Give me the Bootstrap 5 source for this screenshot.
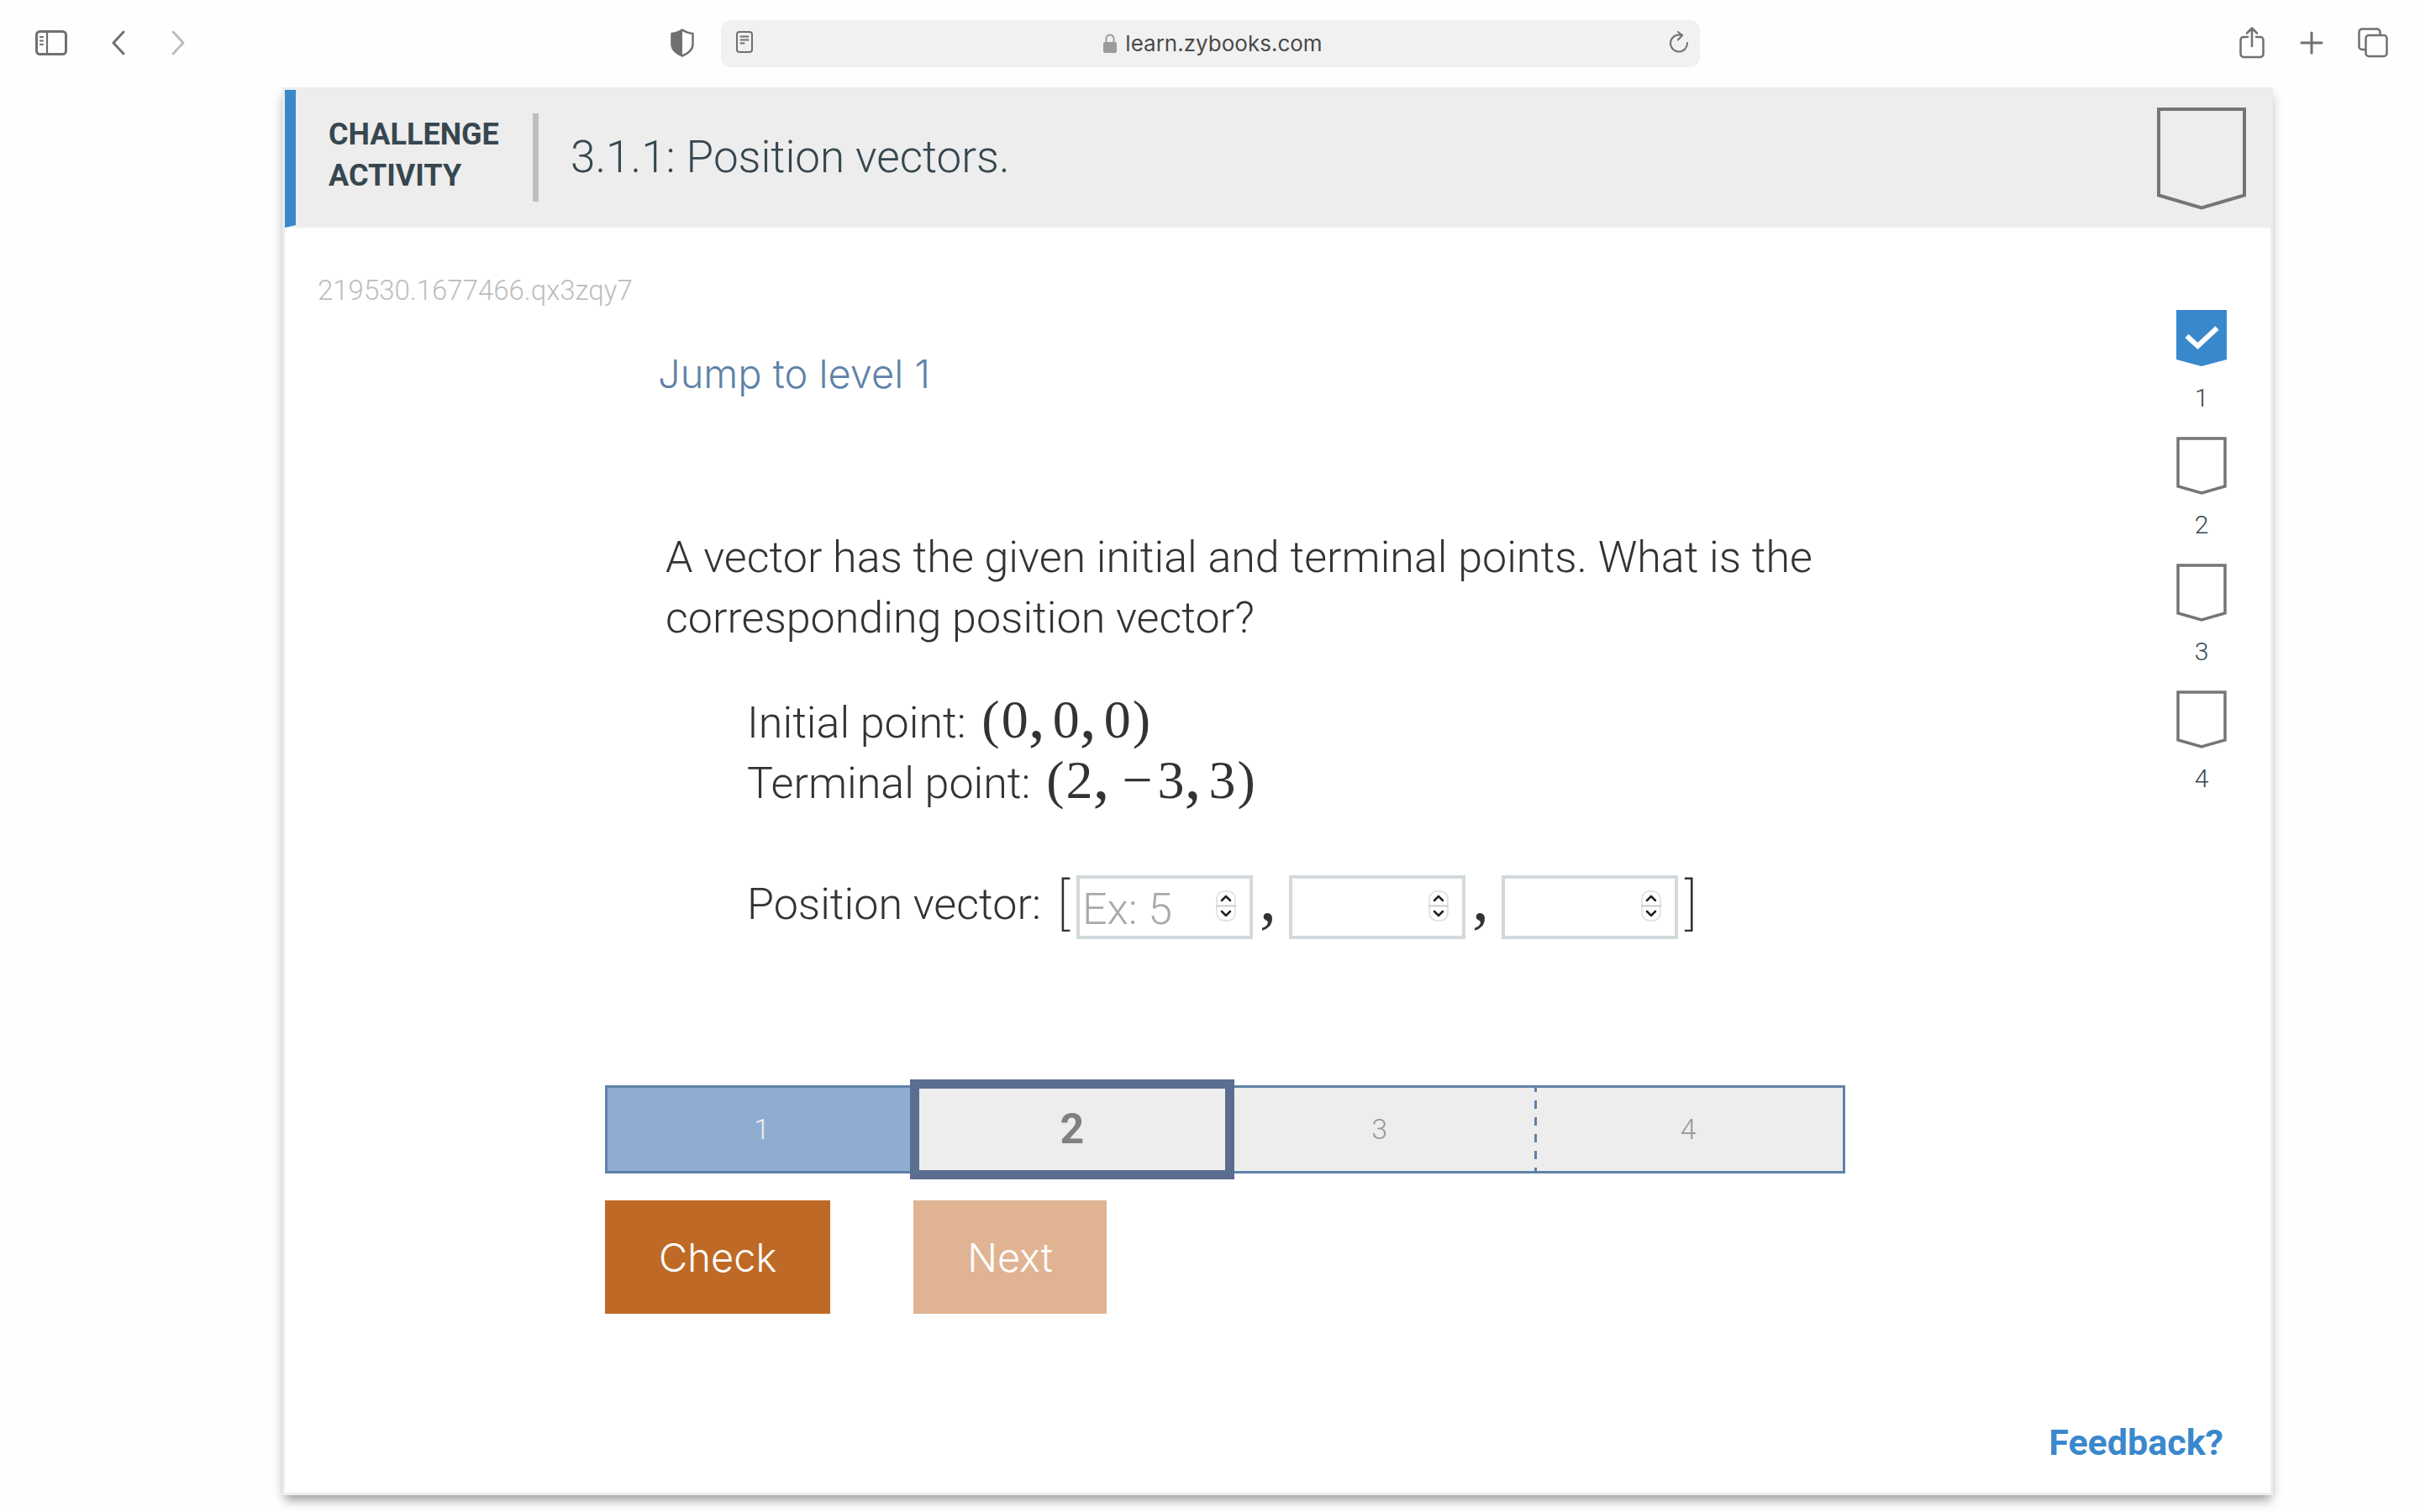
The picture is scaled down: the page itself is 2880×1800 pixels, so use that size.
<!DOCTYPE html>
<html lang="en">
<head>
<meta charset="utf-8">
<meta name="viewport" content="width=device-width, initial-scale=1">
<title>3.1.1: Position vectors</title>
<link href="https://cdn.jsdelivr.net/npm/bootstrap@5.3.0/dist/css/bootstrap.min.css" rel="stylesheet">
<style>
  :root { --ink: #37474f; --blue: #3a88cc; --steel: #5f82a8; --edge: #757575; --pale: #ededed; }
  body { background: #fefefe; font-family: Roboto, "Liberation Sans", sans-serif; font-weight: 300; color: #333; }
  svg { display: block; flex: none; fill: none; stroke: #707070; stroke-width: 3; stroke-linecap: round; stroke-linejoin: round; }
  svg.thin { stroke-width: 2; }
  svg.pennant { stroke: var(--edge); stroke-width: 4; stroke-linejoin: miter; }
  .icon-btn { border: 0; background: none; padding: 0; }

  /* browser toolbar */
  .toolbar { height: 104px; padding: 0 38px; background: #fefefe; position: relative; z-index: 1; }
  .tool-group { flex: 1 1 0; }
  .tool-group.nav-tools { gap: 51px; }
  .tool-group.page-tools { gap: 41px; }
  .address { flex: 0 0 1165px; height: 56px; background: #f1f1f1; border-radius: 12px; padding: 0 12px 0 17px; font: 400 26px/32px Inter, sans-serif; color: #4a4a4a; }

  /* activity card */
  .activity { margin: 0 175px 19px 336px; border: 3px solid var(--pale); background: #fff; box-shadow: 0 9px 12px -3px rgba(0,0,0,.36), 0 0 16px rgba(0,0,0,.06); }
  .activity-head { height: 164px; background: var(--pale); color: var(--ink); border-left: 13px solid var(--blue); border-bottom: 3px solid var(--pale); padding: 0 29px 0 39px; }
  .kind { font-weight: 700; font-size: 36px; line-height: 49px; width: 243px; padding-bottom: 5px; }
  .title { font-weight: 300; font-size: 53px; line-height: 72px; border-left: 7px solid #bdbdbd; padding: 16px 0 17px 38px; }

  .activity-body { padding: 53px 52px 34px 39px; }
  .seed { color: #bdbdbd; font-size: 33px; line-height: 44px; margin-bottom: 47px; }
  .grotesk { font-family: Inter, "Liberation Sans", sans-serif; font-weight: 300; font-size: 47px; line-height: 60px; }
  .jump { display: block; color: var(--steel); text-decoration: none; padding-left: 63px; margin-bottom: 153px; }
  .work { margin-left: 342px; width: 1476px; }
  .prose { font-size: 52px; line-height: 72px; }
  .question { padding-left: 72px; margin-bottom: 53px; }
  .givens { padding-left: 169px; }
  .tex { font-family: "Liberation Serif", serif; font-weight: 400; font-size: 64px; line-height: 64px; padding-left: 4px; }
  .tex .sep { font-size: 80px; line-height: 0; margin-right: 9px; }
  .tex .par { padding: 0 2px; }
  .tex .neg { padding: 0 6px; }

  .answer { margin-top: 72px; margin-bottom: 174px; height: 77px; }
  .bracket { width: 42px; font-weight: 200; font-size: 66px; line-height: 72px; }
  .entry { position: relative; width: 210px; padding-top: 1px; }
  .entry input { width: 100%; height: 76px; border: 4px solid #d2d9dc; border-radius: 0; padding: 4px 4px 0 3px; font: inherit; color: #333; background: #fff; appearance: textfield; }
  .entry input::-webkit-inner-spin-button { appearance: none; }
  .entry input::placeholder { color: #a9a9a9; opacity: 1; }
  .entry svg { position: absolute; right: 20px; top: 19px; }
  .comma { width: 43px; padding-left: 8px; font-family: "Liberation Serif", serif; font-weight: 400; font-size: 80px; line-height: 54px; }

  .steps { height: 105px; border: 3px solid var(--steel); background: var(--pale); color: #999; font-size: 34px; margin-bottom: 32px; }
  .step { flex: 1 1 0; position: relative; }
  .step.done { background: #8fadd1; color: #eee; }
  .step.dashed { background: repeating-linear-gradient(var(--steel) 0 5px, transparent 5px 15px, var(--steel) 15px 20px) left top / 3px 100% no-repeat; }
  .current { position: absolute; inset: -10px -11px -10px -8px; border: 11px solid #5b6e92; background: var(--pale); color: #808080; font-weight: 700; font-size: 50px; z-index: 1; }
  .actions { gap: 99px; margin-bottom: 127px; }
  .act { border: 0; height: 135px; color: #fff; background: #be6a26; padding: 0 64px; }
  .act:disabled { background: #e0b493; color: #fff; }

  .levels { width: 60px; color: var(--ink); font-size: 30px; line-height: 40px; margin-top: 45px; }
  .levels li { height: 151px; text-align: center; }
  .levels svg { margin-bottom: 16px; }
  .feedback { color: var(--blue); font-weight: 700; font-size: 43px; line-height: 52px; text-decoration: none; padding-right: 4px; }
</style>
<script src="https://cdn.jsdelivr.net/npm/bootstrap@5.3.0/dist/js/bootstrap.bundle.min.js"></script>
</head>
<body>
<header class="toolbar d-flex align-items-center">
  <div class="tool-group nav-tools d-flex align-items-center">
    <button class="icon-btn" aria-label="Sidebar"><svg width="42" height="34" viewBox="0 0 42 34"><rect x="5.500" y="2.500" width="35" height="27" rx="4"/><path d="M18 3v26M10 9h3M10 13.500h3M10 18h3" stroke-width="2.200"/></svg></button>
    <button class="icon-btn" aria-label="Back"><svg width="20" height="34" viewBox="0 0 20 34"><path d="M16 3L4 16l12 13"/></svg></button>
    <button class="icon-btn" aria-label="Forward"><svg width="20" height="34" viewBox="0 0 20 34" style="stroke:#bdbdbd"><path d="M4 3l12 13L4 29"/></svg></button>
    <button class="icon-btn ms-auto me-4" aria-label="Privacy report"><svg width="40" height="38" viewBox="0 0 40 38"><path d="M18 2.500C14 5.500 10 6.500 5.500 7v13c0 6 6 11 12.500 13.500C24.500 31 30.500 26 30.500 20V7C26 6.500 22 5.500 18 2.500z" stroke-width="2.500"/><path d="M18 2.500C14 5.500 10 6.500 5.500 7v13c0 6 6 11 12.500 13.500z" fill="#707070" stroke="none"/></svg></button>
  </div>
  <div class="address d-flex align-items-center justify-content-between">
    <svg class="thin" width="22" height="30" viewBox="0 0 22 30"><rect x="2" y="1" width="18" height="24" rx="3"/><path d="M6.500 6.500h9M6.500 10.500h9M6.500 14.500h4"/></svg>
    <span class="d-flex align-items-center gap-2"><svg class="thin" width="24" height="26" viewBox="0 0 24 26" style="stroke:#9b9b9b"><rect x="7" y="12" width="14" height="11" rx="1" fill="#9b9b9b"/><path d="M9.500 11V7a4.500 4.500 0 019 0v4"/></svg>learn.zybooks.com</span>
    <button class="icon-btn" aria-label="Reload"><svg class="thin" width="26" height="30" viewBox="0 0 26 30"><path d="M24 14A10 10 0 1 1 14 4.500h4M13 1l5 4-5 5.500"/></svg></button>
  </div>
  <div class="tool-group page-tools d-flex align-items-center justify-content-end">
    <button class="icon-btn" aria-label="Share"><svg width="32" height="42" viewBox="0 0 32 42"><path d="M11 13H6a3.500 3.500 0 00-3.500 3.500v17A3.500 3.500 0 006 37h20a3.500 3.500 0 003.500-3.500v-17A3.500 3.500 0 0026 13h-5M16 24V3M10 8.500L16 2.500l6 6" stroke-width="2.500"/></svg></button>
    <button class="icon-btn" aria-label="New tab"><svg width="28" height="30" viewBox="0 0 28 30"><path d="M14 2v24M2 14h24"/></svg></button>
    <button class="icon-btn" aria-label="Tabs"><svg width="36" height="38" viewBox="0 0 36 38"><g stroke-width="2.500"><path d="M8 26H5a3.500 3.500 0 01-3.500-3.500V5A3.500 3.500 0 015 1.500h18A3.500 3.500 0 0126.500 5v3"/><rect x="9.500" y="9" width="25" height="25" rx="3.500"/></g></svg></button>
  </div>
</header>

<main class="activity">
  <div class="activity-head d-flex align-items-center">
    <div class="kind">CHALLENGE<br>ACTIVITY</div>
    <h1 class="title m-0">3.1.1: Position vectors.</h1>
    <svg class="pennant ms-auto" width="106" height="124" viewBox="0 0 106 124"><path d="M2 4h102v102.500L53 121.500 2 106.500z"/></svg>
  </div>
  <div class="activity-body">
    <div class="d-flex justify-content-between align-items-start">
      <div>
        <div class="seed">219530.1677466.qx3zqy7</div>
        <div class="work">
          <a class="jump grotesk" href="#">Jump to level 1</a>
          <p class="prose question">A vector has the given initial and terminal points. What is the corresponding position vector?</p>
          <div class="prose givens">
            <div>Initial point: <span class="tex"><span class="par">(</span>0<span class="sep">,</span>0<span class="sep">,</span>0<span class="par">)</span></span></div>
            <div>Terminal point: <span class="tex"><span class="par">(</span>2<span class="sep">,</span><span class="neg">−</span>3<span class="sep">,</span>3<span class="par">)</span></span></div>
            <div class="answer d-flex align-items-start">
              <label for="vx">Position vector:</label>
              <span class="bracket text-end pe-2">[</span>
              <div class="entry"><input id="vx" type="number" placeholder="Ex: 5"><svg width="24" height="37" viewBox="0 0 24 37"><rect x="1" y="1" width="22" height="35" rx="9" fill="#fff" stroke="#ddd" stroke-width="1.500"/><path d="M1 18.500h22" stroke="#ccc" stroke-width="2"/><path d="M7 12l5-5 5 5M7 25l5 5 5-5" stroke="#222" stroke-width="2.500"/></svg></div>
              <span class="comma">,</span>
              <div class="entry"><input aria-label="y component" type="number"><svg width="24" height="37" viewBox="0 0 24 37"><rect x="1" y="1" width="22" height="35" rx="9" fill="#fff" stroke="#ddd" stroke-width="1.500"/><path d="M1 18.500h22" stroke="#ccc" stroke-width="2"/><path d="M7 12l5-5 5 5M7 25l5 5 5-5" stroke="#222" stroke-width="2.500"/></svg></div>
              <span class="comma">,</span>
              <div class="entry"><input aria-label="z component" type="number"><svg width="24" height="37" viewBox="0 0 24 37"><rect x="1" y="1" width="22" height="35" rx="9" fill="#fff" stroke="#ddd" stroke-width="1.500"/><path d="M1 18.500h22" stroke="#ccc" stroke-width="2"/><path d="M7 12l5-5 5 5M7 25l5 5 5-5" stroke="#222" stroke-width="2.500"/></svg></div>
              <span class="bracket ps-2">]</span>
            </div>
          </div>
          <div class="steps d-flex">
            <div class="step done d-flex align-items-center justify-content-center">1</div>
            <div class="step"><div class="current d-flex align-items-center justify-content-center">2</div></div>
            <div class="step d-flex align-items-center justify-content-center">3</div>
            <div class="step dashed d-flex align-items-center justify-content-center">4</div>
          </div>
          <div class="actions d-flex">
            <button class="act grotesk">Check</button>
            <button class="act grotesk" disabled>Next</button>
          </div>
        </div>
      </div>
      <ol class="levels list-unstyled mb-0">
        <li><svg width="60" height="69" viewBox="0 0 60 69"><path d="M0 0h60v59L30 67 0 59z" fill="#3a88cc" stroke="none"/><path d="M12.500 31L25.500 43 48.500 21.500" stroke="#fff" stroke-width="6" stroke-linecap="butt" stroke-linejoin="miter"/></svg>1</li>
        <li><svg class="pennant" width="60" height="69" viewBox="0 0 60 69"><path d="M2 2h56v57L30 67 2 59z" stroke-width="3.500"/></svg>2</li>
        <li><svg class="pennant" width="60" height="69" viewBox="0 0 60 69"><path d="M2 2h56v57L30 67 2 59z" stroke-width="3.500"/></svg>3</li>
        <li><svg class="pennant" width="60" height="69" viewBox="0 0 60 69"><path d="M2 2h56v57L30 67 2 59z" stroke-width="3.500"/></svg>4</li>
      </ol>
    </div>
    <div class="d-flex justify-content-end"><a class="feedback" href="#">Feedback?</a></div>
  </div>
</main>
</body>
</html>
